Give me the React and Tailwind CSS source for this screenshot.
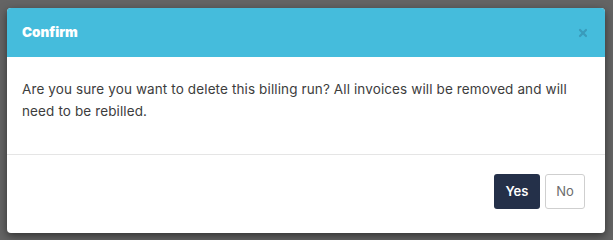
import { X } from "lucide-react";

export default function App() {
  return (
    <div className="h-[240px] w-[613px] bg-[#646464] pt-[8px] pl-[7px] font-['Inter',sans-serif]">
      <div className="w-[598px] h-[225px] bg-white rounded-[4px] overflow-hidden shadow-[0_3px_8px_rgba(0,0,0,0.5)] flex flex-col">
        {/* header */}
        <div className="h-[49px] bg-[#45bcdc] flex items-center justify-between px-[15px] shrink-0">
          <h3 className="text-[13.5px] font-black text-white">Confirm</h3>
          <X className="w-[12px] h-[12px] text-[#3a9bbb] mr-[1px]" strokeWidth={4.5} />
        </div>

        {/* body */}
        <div className="px-[15px] pt-[21px] pb-[32px] border-b border-[#e5e5e5] text-[13.5px] tracking-[0.12px] leading-[22px] text-[#3d3d3d]">
          Are you sure you want to delete this billing run? All invoices will be removed and will
          <br />
          need to be rebilled.
        </div>

        {/* footer */}
        <div className="flex justify-end gap-[5px] pt-[19px] pr-[20px]">
          <button className="h-[35px] w-[46px] rounded-[3px] bg-[#243049] text-white text-[13px] font-semibold">
            Yes
          </button>
          <button className="h-[35px] w-[40px] rounded-[3px] border border-[#cfcfcf] bg-white text-[#6b6b6b] text-[13px]">
            No
          </button>
        </div>
      </div>
    </div>
  );
}
